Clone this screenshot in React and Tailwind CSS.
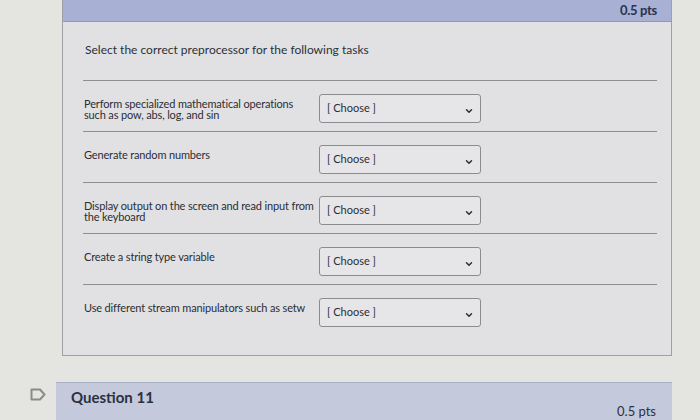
import { ChevronDown } from 'lucide-react';

const TASKS = [
  'Perform specialized mathematical operations such as pow, abs, log, and sin',
  'Generate random numbers',
  'Display output on the screen and read input from the keyboard',
  'Create a string type variable',
  'Use different stream manipulators such as setw',
];

export default function App() {
  return (
    <div
      className="w-[700px] h-[420px] overflow-hidden bg-[#e4e4e1] text-[#2d3b45]"
      style={{ fontFamily: 'Lato, "Open Sans", sans-serif' }}
    >
      {/* Question 10 card */}
      <div className="ml-[62px] w-[610px] border-x border-b border-[#a0a0a4] bg-[#e1e1e4]">
        <div className="h-[22px] bg-[#a8b1d4] border-b border-[#8f98bb] flex items-center justify-end pr-[14px]">
          <span className="text-[13px] font-bold text-[#2a3350] tracking-tight">0.5 pts</span>
        </div>
        <div className="pl-[20px] pr-[14px] pt-[20px] pb-[20px]">
          <p className="text-[12px] leading-[16px] text-[#2d3035] ml-[2px]">
            Select the correct preprocessor for the following tasks
          </p>
          <div className="mt-[22px]">
            {TASKS.map((t, i) => (
              <Row key={i} text={t} />
            ))}
          </div>
        </div>
      </div>

      {/* Question 11 header */}
      <div className="mt-[26px] flex items-start">
        <div className="w-[56px] flex justify-end pr-[10px] pt-[6px]">
          <svg width="16" height="13" viewBox="0 0 16 13" fill="none">
            <path
              d="M1.5 1.5 H10 L14.5 6.5 L10 11.5 H1.5 Z"
              stroke="#8a8a8c"
              strokeWidth="2"
              strokeLinejoin="round"
            />
          </svg>
        </div>
        <div className="w-[616px] h-[50px] bg-[#c4c9dc] border-t border-[#a9aec2] flex items-start justify-between pl-[15px] pr-[16px] pt-[3px]">
          <span className="text-[15px] font-bold text-[#2a3142]">Question 11</span>
          <span className="text-[13px] text-[#2a3142] mt-[16px]">0.5 pts</span>
        </div>
      </div>
    </div>
  );
}

function Row({ text }) {
  return (
    <div className="h-[51px] border-t border-[#8e8e92] flex items-start">
      <div className="w-[236px] pl-[1px] pr-[2px] pt-[17px] text-[11px] leading-[11px] tracking-[-0.15px] text-[#2b2e33]">
        {text}
      </div>
      <div className="mt-[13px] w-[162px] h-[29px] border border-[#8c8c90] rounded-[3px] bg-[#e6e6e9] flex items-center justify-between pl-[7px] pr-[6px]">
        <span className="text-[11px] text-[#2b2e33]">[ Choose ]</span>
        <ChevronDown size={10} strokeWidth={3.5} className="text-[#2b2e33] mt-[4px]" />
      </div>
    </div>
  );
}
